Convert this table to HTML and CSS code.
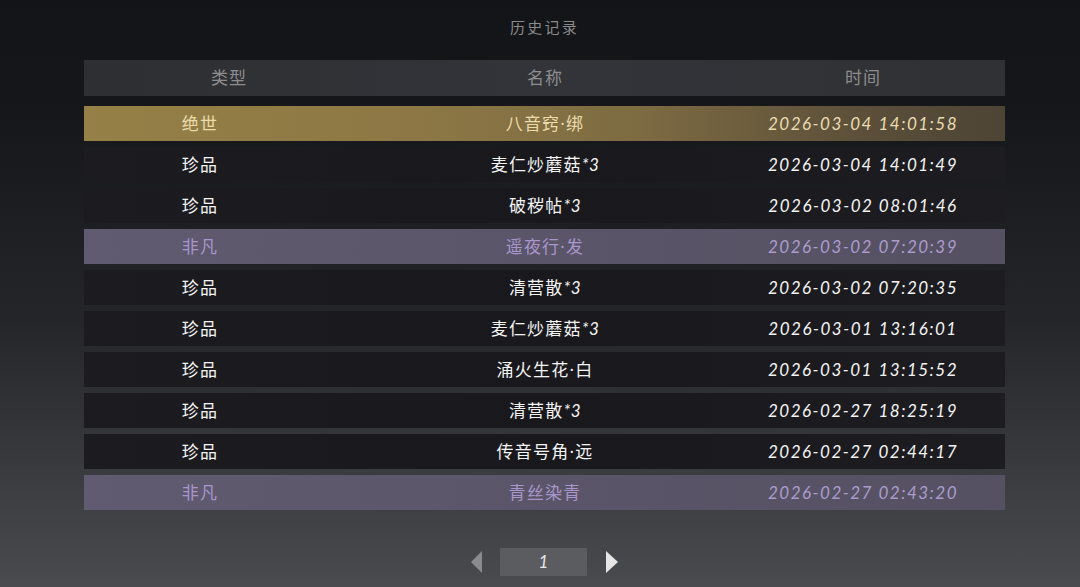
FILE: index.html
```html
<!DOCTYPE html>
<html lang="zh">
<head>
<meta charset="utf-8">
<title>历史记录</title>
<link rel="stylesheet" href="styles.css">
</head>
<body>
<div class="page">
  <div class="title">历史记录</div>
  <div class="table">
    <div class="head">
      <div class="h-type">类型</div>
      <div class="h-name">名称</div>
      <div class="h-time">时间</div>
    </div>
    <div class="rows">
      <div class="row gold"><div class="c-type">绝世</div><div class="c-name">八音窍·绑</div><div class="c-time">2026-03-04 14:01:58</div></div>
      <div class="row dark"><div class="c-type">珍品</div><div class="c-name">麦仁炒蘑菇<span class="qty">*3</span></div><div class="c-time">2026-03-04 14:01:49</div></div>
      <div class="row dark"><div class="c-type">珍品</div><div class="c-name">破秽帖<span class="qty">*3</span></div><div class="c-time">2026-03-02 08:01:46</div></div>
      <div class="row purple"><div class="c-type">非凡</div><div class="c-name">遥夜行·发</div><div class="c-time">2026-03-02 07:20:39</div></div>
      <div class="row dark"><div class="c-type">珍品</div><div class="c-name">清营散<span class="qty">*3</span></div><div class="c-time">2026-03-02 07:20:35</div></div>
      <div class="row dark"><div class="c-type">珍品</div><div class="c-name">麦仁炒蘑菇<span class="qty">*3</span></div><div class="c-time">2026-03-01 13:16:01</div></div>
      <div class="row dark"><div class="c-type">珍品</div><div class="c-name">涌火生花·白</div><div class="c-time">2026-03-01 13:15:52</div></div>
      <div class="row dark"><div class="c-type">珍品</div><div class="c-name">清营散<span class="qty">*3</span></div><div class="c-time">2026-02-27 18:25:19</div></div>
      <div class="row dark"><div class="c-type">珍品</div><div class="c-name">传音号角·远</div><div class="c-time">2026-02-27 02:44:17</div></div>
      <div class="row purple"><div class="c-type">非凡</div><div class="c-name">青丝染青</div><div class="c-time">2026-02-27 02:43:20</div></div>
    </div>
    <div class="pager">
      <span class="tri tri-left"></span>
      <div class="page-box">1</div>
      <span class="tri tri-right"></span>
    </div>
  </div>
</div>
</body>
</html>
```

FILE: styles.css
```css
html, body {
  margin: 0;
  padding: 0;
}
body {
  width: 1080px;
  height: 587px;
  overflow: hidden;
  background: linear-gradient(180deg, #131417 0%, #16171a 20%, #25262a 55%, #3a3b3e 80%, #4a4b4e 100%);
  font-family: "Noto Sans", "Noto Sans CJK SC", sans-serif;
}
.page {
  width: 1080px;
  height: 587px;
}
.title {
  width: 921px;
  margin-left: 84px;
  padding-top: 16px;
  height: 44px;
  box-sizing: border-box;
  text-align: center;
  font-size: 15px;
  line-height: 22px;
  letter-spacing: 2.3px;
  color: #8a8a8a;
}
.table {
  width: 921px;
  margin-left: 84px;
}
.head {
  margin-top: 16px;
  height: 36px;
  display: grid;
  grid-template-columns: 290px 342px 1fr;
  align-items: center;
  background: linear-gradient(90deg, #2e2f33 0%, #333439 50%, #303135 100%);
  color: #8d8d8d;
  font-size: 17px;
  line-height: 20px;
  letter-spacing: 1px;
  text-align: center;
}
.h-time {
  padding-left: 5px;
}
.rows {
  margin-top: 10px;
  display: flex;
  flex-direction: column;
  gap: 6px;
}
.row {
  height: 35px;
  display: grid;
  grid-template-columns: 232px 438px 1fr;
  align-items: center;
  text-align: center;
  font-size: 17px;
  line-height: 20px;
  color: #f4f4f4;
  white-space: nowrap;
}
.c-type, .c-name {
  letter-spacing: 1.2px;
}
.c-name {
  padding-left: 20px;
}
.qty {
  font-family: "Lato", "Open Sans", sans-serif;
  font-style: italic;
  letter-spacing: 0.5px;
}
.c-time {
  padding-right: 33px;
  font-family: "Lato", "Open Sans", sans-serif;
  font-style: italic;
  font-size: 17px;
  letter-spacing: 1.5px;
}
.dark {
  background: linear-gradient(90deg, #1c1c20 0%, #19191d 50%, #1d1d21 100%);
}
.gold {
  background: linear-gradient(90deg, #958047 0%, #8d7845 35%, #7d6b42 60%, #5b4f3a 85%, #4d4435 100%);
  color: #eadbaa;
}
.gold .c-time {
  color: #eadcb0;
}
.purple {
  background: linear-gradient(90deg, #615b71 0%, #5a5568 50%, #555163 100%);
  color: #a896cc;
}
.purple .c-time {
  color: #ab9ccd;
}
.pager {
  margin-top: 38px;
  display: flex;
  justify-content: center;
  align-items: center;
  gap: 18px;
}
.tri {
  width: 0;
  height: 0;
  border-top: 11px solid transparent;
  border-bottom: 11px solid transparent;
}
.tri-left {
  border-right: 11px solid #8a8b8e;
}
.tri-right {
  border-left: 12px solid #e6e6e6;
  margin-left: 1px;
}
.page-box {
  width: 87px;
  height: 28px;
  background: #5b5c5f;
  color: #e8e8e8;
  text-align: center;
  line-height: 28px;
  font-family: "Lato", "Open Sans", sans-serif;
  font-style: italic;
  font-size: 17px;
}
```
